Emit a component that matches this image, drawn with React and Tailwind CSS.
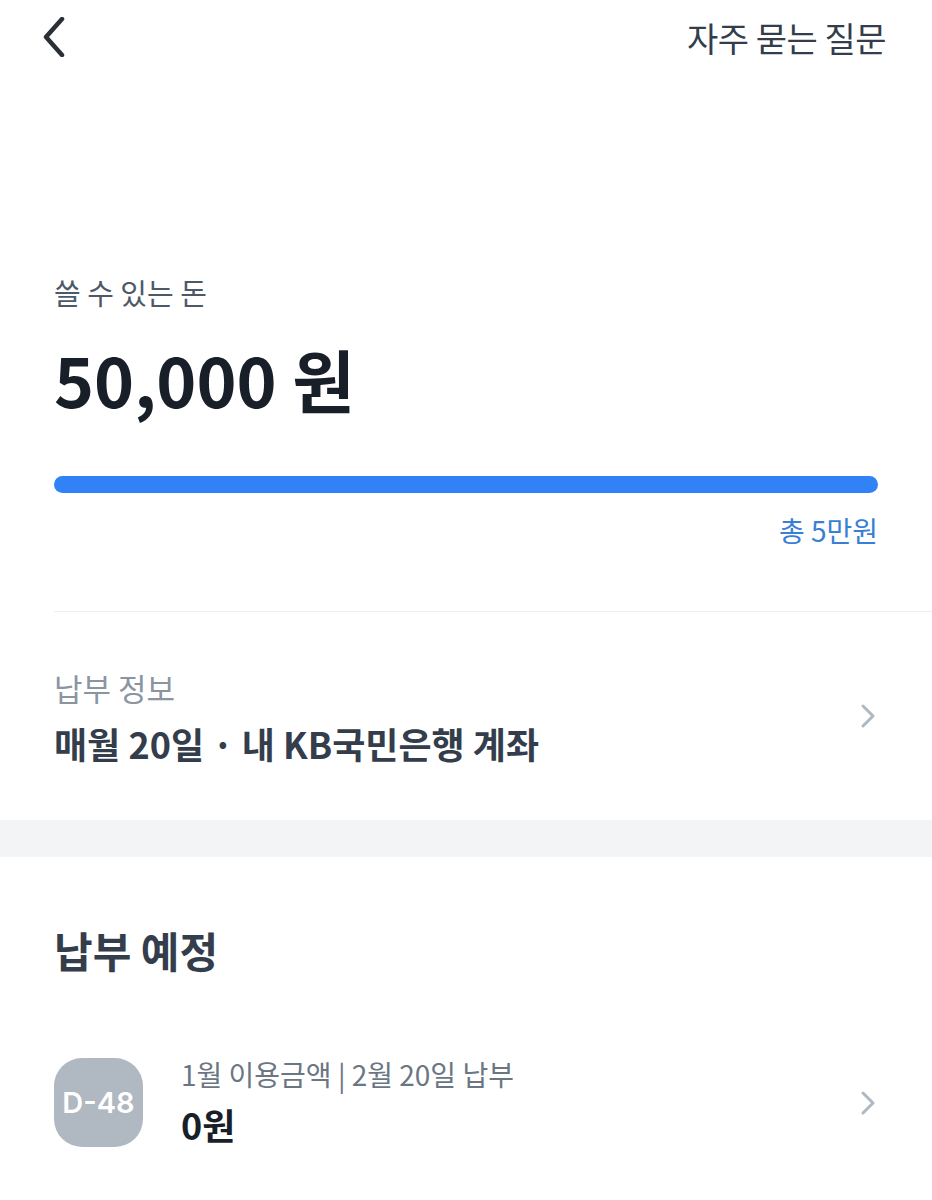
const font = { fontFamily: '"Noto Sans CJK KR", "Noto Sans", sans-serif' }

function BackIcon() {
  return (
    <svg width="24" height="40" viewBox="0 0 24 40" fill="none" stroke="#2b2f36" strokeWidth="4.5" strokeLinecap="round" strokeLinejoin="round">
      <path d="M20 2 L4 20 L20 38" />
    </svg>
  )
}

function Chevron() {
  return (
    <svg width="16" height="26" viewBox="0 0 16 26" fill="none" stroke="#b0b8c1" strokeWidth="3" strokeLinecap="round" strokeLinejoin="round">
      <path d="M3 3 L13 13 L3 23" />
    </svg>
  )
}

export default function App() {
  return (
    <div className="w-[932px] h-[1200px] bg-white overflow-hidden" style={font}>
      {/* 상단 바 */}
      <div className="h-[74px] flex items-center justify-between pl-[42px] pr-[46px]">
        <BackIcon />
        <span className="text-[34px] text-[#333d4b] tracking-[-0.5px]">자주 묻는 질문</span>
      </div>

      {/* 쓸 수 있는 돈 */}
      <div className="px-[54px] pt-[198px]">
        <p className="text-[29px] leading-[40px] text-[#4e5968]">쓸 수 있는 돈</p>
        <p className="mt-[27px] text-[68px] leading-[80px] font-bold text-[#191f28]">50,000 원</p>
        <div className="mt-[57px] h-[17px] rounded-full bg-[#3182f6]" />
        <p className="mt-[17px] text-right text-[28px] leading-[40px] text-[#3a7fd6]">총 5만원</p>
      </div>

      <div className="mt-[61px] ml-[54px] h-px bg-[#eceef0]" />

      {/* 납부 정보 */}
      <div className="h-[208px] px-[54px] flex items-center justify-between">
        <div>
          <p className="text-[31px] leading-[40px] text-[#8b95a1]">납부 정보</p>
          <p className="mt-[13px] text-[36px] leading-[44px] font-bold text-[#333d4b]">매월 20일 · 내 KB국민은행 계좌</p>
        </div>
        <div className="mr-[2px]"><Chevron /></div>
      </div>

      <div className="h-[37px] bg-[#f2f4f6]" />

      {/* 납부 예정 */}
      <div className="px-[54px] pt-[67px]">
        <h2 className="text-[42px] leading-[52px] font-bold text-[#333d4b]">납부 예정</h2>
        <div className="mt-[82px] flex items-start">
          <div className="w-[89px] h-[89px] rounded-[28px] bg-[#b0b8c1] flex items-center justify-center">
            <span className="text-[29px] font-semibold text-white" style={{ fontFamily: 'Inter, "Noto Sans", sans-serif' }}>D-48</span>
          </div>
          <div className="ml-[38px] -mt-[2px] flex-1">
            <p className="text-[28px] leading-[36px] text-[#6b7684]">1월 이용금액 | 2월 20일 납부</p>
            <p className="mt-[10px] text-[36px] leading-[44px] font-bold text-[#191f28]">0원</p>
          </div>
          <div className="self-center mr-[2px]"><Chevron /></div>
        </div>
      </div>
    </div>
  )
}
